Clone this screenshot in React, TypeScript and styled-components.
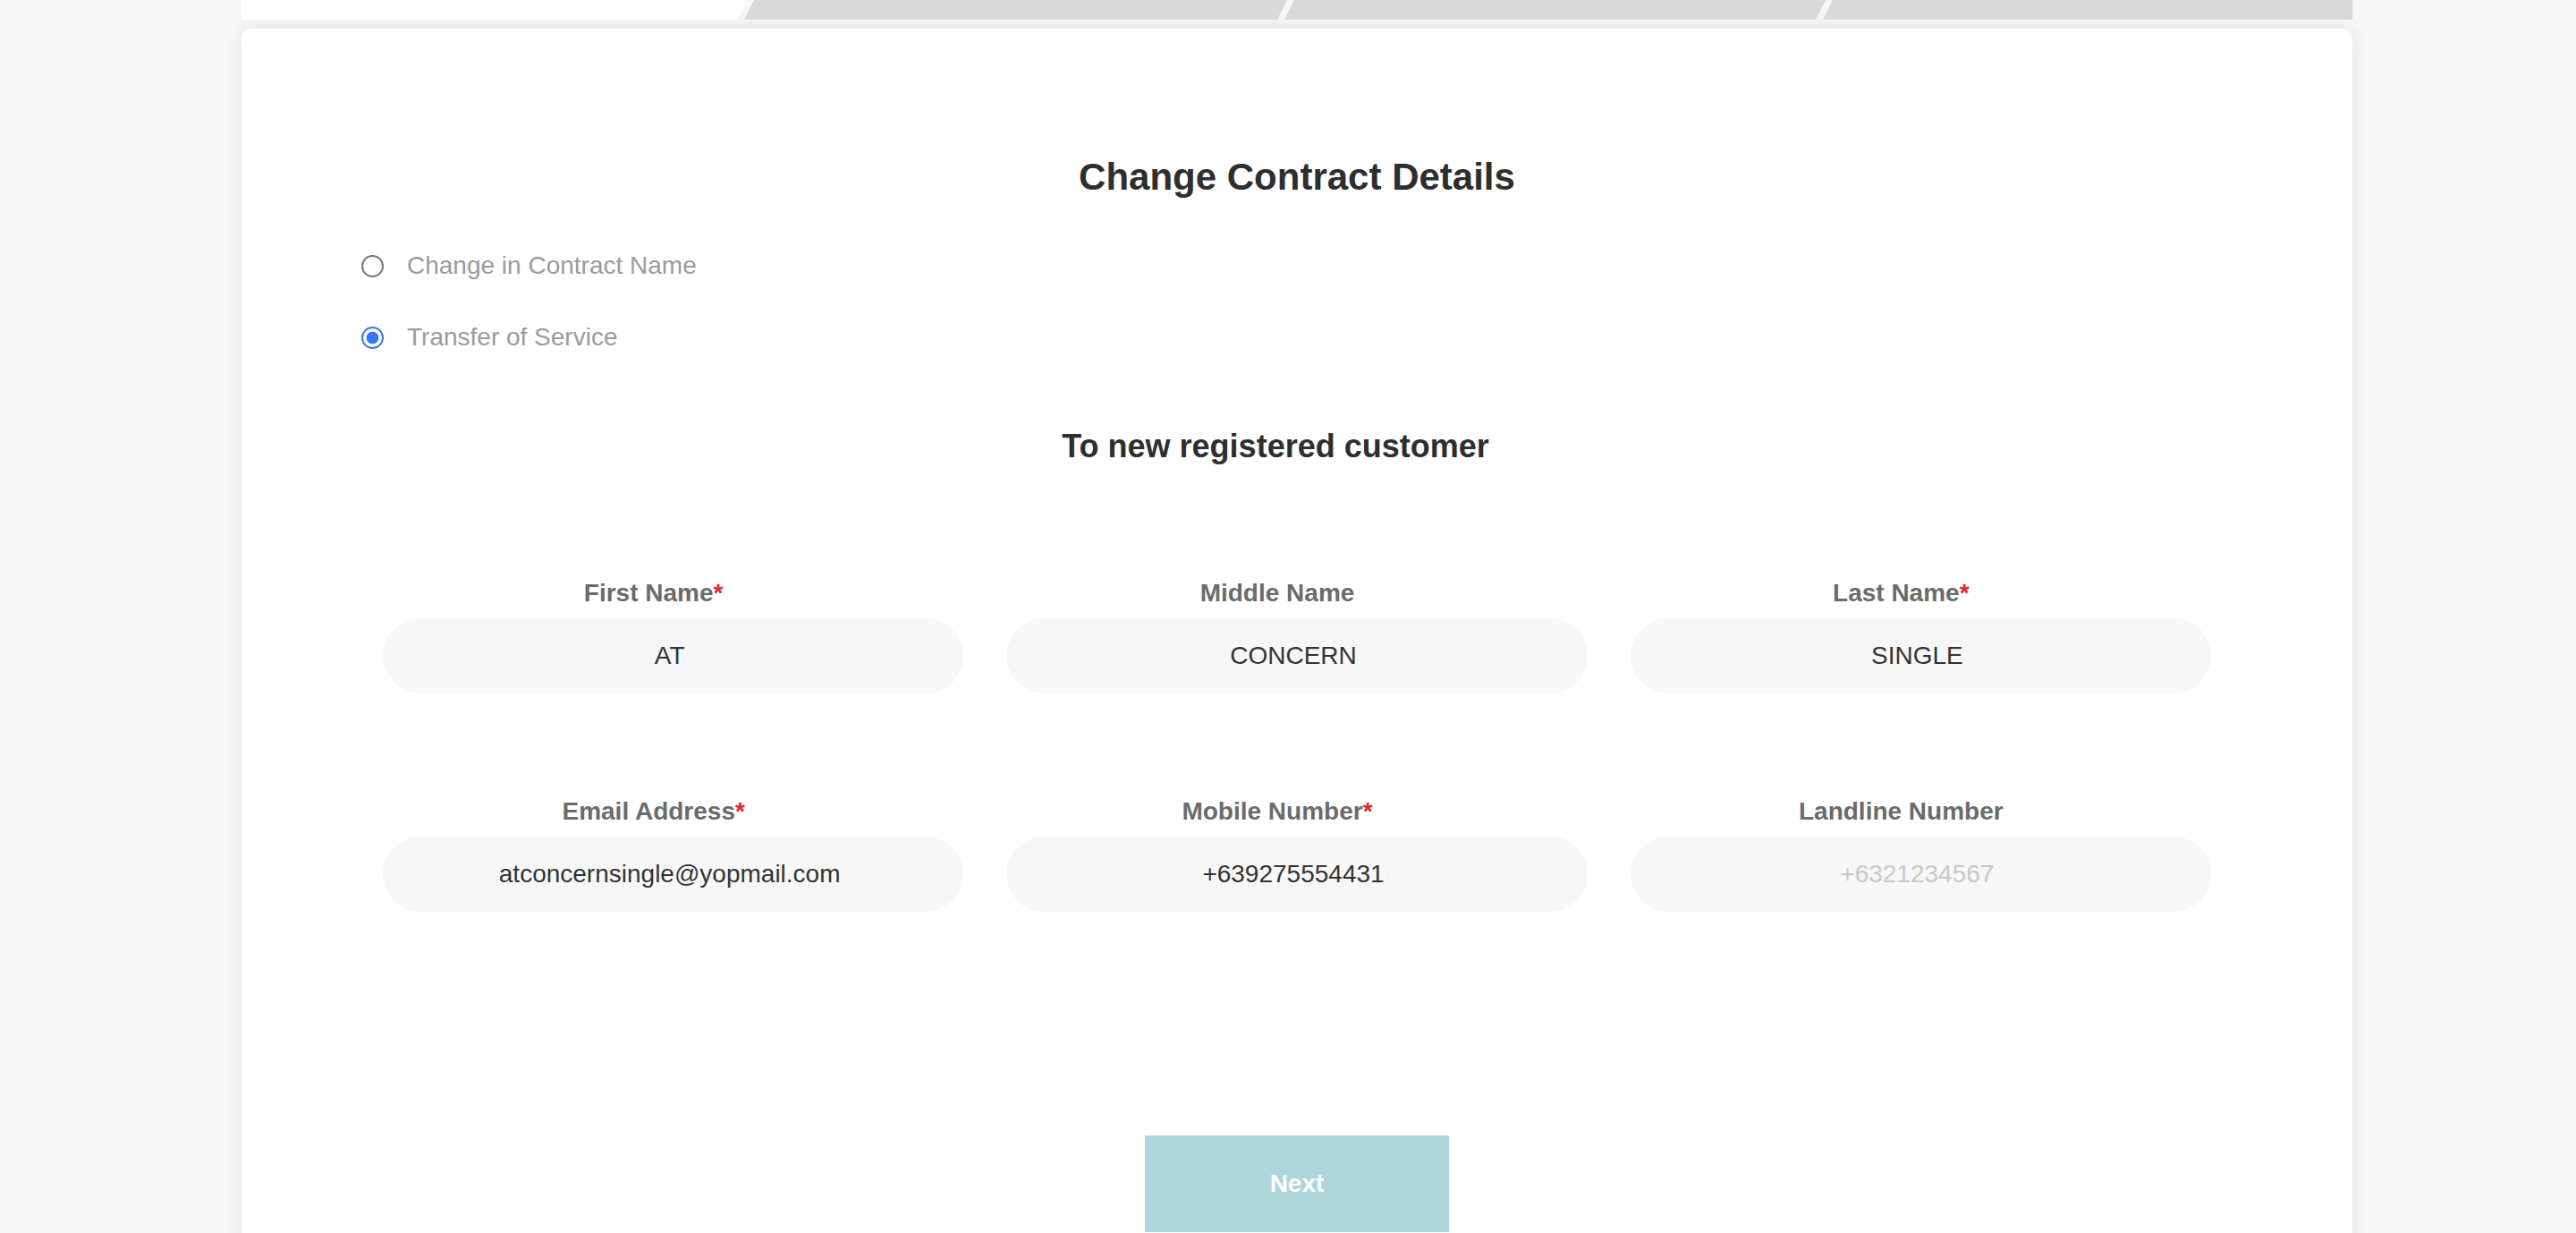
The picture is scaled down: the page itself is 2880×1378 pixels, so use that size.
import React from "react";
import styled, { createGlobalStyle } from "styled-components";

const GlobalStyle = createGlobalStyle`
  html, body {
    margin: 0;
    padding: 0;
    overflow: hidden;
    background: #f7f7f7;
    font-family: "Liberation Sans", Arial, Helvetica, sans-serif;
  }
  * { box-sizing: border-box; }
`;

const Page = styled.div`
  width: 2360px;
  margin: 0 0 0 270px;
  display: flex;
  flex-direction: column;
`;

const StepBar = styled.div`
  position: relative;
  z-index: 1;
  display: flex;
  height: 22px;
  margin-bottom: 10px;
`;

const Step = styled.div<{ $w?: number; $active?: boolean; $first?: boolean; $last?: boolean }>`
  height: 100%;
  flex: ${(p) => (p.$w ? `0 0 ${p.$w}px` : "1 1 auto")};
  margin-left: ${(p) => (p.$first ? "0" : "-3px")};
  background: ${(p) => (p.$active ? "#ffffff" : "#d9d9d9")};
  clip-path: ${(p) =>
    `polygon(${p.$first ? "0" : "11px"} 0, 100% 0, ${p.$last ? "100%" : "calc(100% - 11px)"} 100%, 0 100%)`};
`;

const Card = styled.div`
  background: #ffffff;
  border-radius: 10px;
  box-shadow: 0 0 22px rgba(0, 0, 0, 0.09);
  padding: 142px 158px 200px;
  display: flex;
  flex-direction: column;
  min-height: 1500px;
`;

const Title = styled.h1`
  margin: 0;
  font-size: 42px;
  line-height: 48px;
  font-weight: 700;
  color: #2e2e2e;
  text-align: center;
`;

const Section = styled.div`
  margin: 0 24px 0 -24px;
  display: flex;
  flex-direction: column;
`;

const RadioGroup = styled.div`
  margin-top: 59px;
  display: flex;
  flex-direction: column;
  gap: 48px;
`;

const RadioRow = styled.label`
  display: flex;
  align-items: center;
  height: 32px;
  font-size: 28px;
  line-height: 32px;
  color: #9b9b9b;
  cursor: pointer;
`;

const RadioInput = styled.input`
  appearance: none;
  -webkit-appearance: none;
  margin: 0 26px 0 0;
  width: 25px;
  height: 25px;
  border-radius: 50%;
  border: 2px solid #767676;
  background: #ffffff;
  flex: 0 0 auto;

  &:checked {
    border: 2.5px solid #3478f6;
    background: radial-gradient(circle, #3478f6 0 6.5px, #ffffff 7.2px);
  }
`;

const SubTitle = styled.h2`
  margin: 85px 0 0;
  font-size: 36px;
  line-height: 42px;
  font-weight: 700;
  color: #2e2e2e;
  text-align: center;
`;

const FieldGrid = styled.div`
  margin-top: 127px;
  display: grid;
  grid-template-columns: repeat(3, 1fr);
  column-gap: 48px;
  row-gap: 116px;
`;

const Field = styled.div`
  display: flex;
  flex-direction: column;
  gap: 12px;
`;

const FieldLabel = styled.label`
  font-size: 28px;
  line-height: 32px;
  font-weight: 700;
  color: #6b6b6b;
  text-align: center;
  padding-right: 44px;
`;

const Req = styled.span`
  color: #e0262c;
`;

const TextInput = styled.input`
  width: 100%;
  height: 84px;
  border: none;
  outline: none;
  border-radius: 42px;
  background: #f7f7f7;
  padding: 0 34px 0 26px;
  font-family: "Liberation Sans", Arial, Helvetica, sans-serif;
  font-size: 28px;
  color: #333333;
  text-align: center;

  &::placeholder {
    color: #c8c8c8;
  }
`;

const ButtonRow = styled.div`
  margin-top: 250px;
  display: flex;
  justify-content: center;
`;

const NextButton = styled.button`
  width: 340px;
  height: 108px;
  border: none;
  border-radius: 0;
  background: #add6dc;
  color: #ffffff;
  font-family: "Liberation Sans", Arial, Helvetica, sans-serif;
  font-size: 28px;
  font-weight: 700;
  cursor: pointer;
`;

type FieldDef = {
  label: string;
  required?: boolean;
  value?: string;
  placeholder?: string;
};

const fields: FieldDef[] = [
  { label: "First Name", required: true, value: "AT" },
  { label: "Middle Name", value: "CONCERN" },
  { label: "Last Name", required: true, value: "SINGLE" },
  { label: "Email Address", required: true, value: "atconcernsingle@yopmail.com" },
  { label: "Mobile Number", required: true, value: "+639275554431" },
  { label: "Landline Number", placeholder: "+6321234567" },
];

const steps = [
  { w: 565, active: true },
  { w: 607 },
  { w: 605 },
  {},
];

export default function App() {
  const [choice, setChoice] = React.useState("transfer");
  return (
    <>
      <GlobalStyle />
      <Page>
        <StepBar>
          {steps.map((s, i) => (
            <Step
              key={i}
              $w={s.w}
              $active={s.active}
              $first={i === 0}
              $last={i === steps.length - 1}
            />
          ))}
        </StepBar>
        <Card>
          <Title>Change Contract Details</Title>
          <Section>
            <RadioGroup>
              <RadioRow>
                <RadioInput
                  type="radio"
                  name="contract"
                  checked={choice === "name"}
                  onChange={() => setChoice("name")}
                />
                Change in Contract Name
              </RadioRow>
              <RadioRow>
                <RadioInput
                  type="radio"
                  name="contract"
                  checked={choice === "transfer"}
                  onChange={() => setChoice("transfer")}
                />
                Transfer of Service
              </RadioRow>
            </RadioGroup>
            <SubTitle>To new registered customer</SubTitle>
          </Section>
          <FieldGrid>
            {fields.map((f) => (
              <Field key={f.label}>
                <FieldLabel>
                  {f.label}
                  {f.required && <Req>*</Req>}
                </FieldLabel>
                <TextInput defaultValue={f.value} placeholder={f.placeholder} />
              </Field>
            ))}
          </FieldGrid>
          <ButtonRow>
            <NextButton>Next</NextButton>
          </ButtonRow>
        </Card>
      </Page>
    </>
  );
}
